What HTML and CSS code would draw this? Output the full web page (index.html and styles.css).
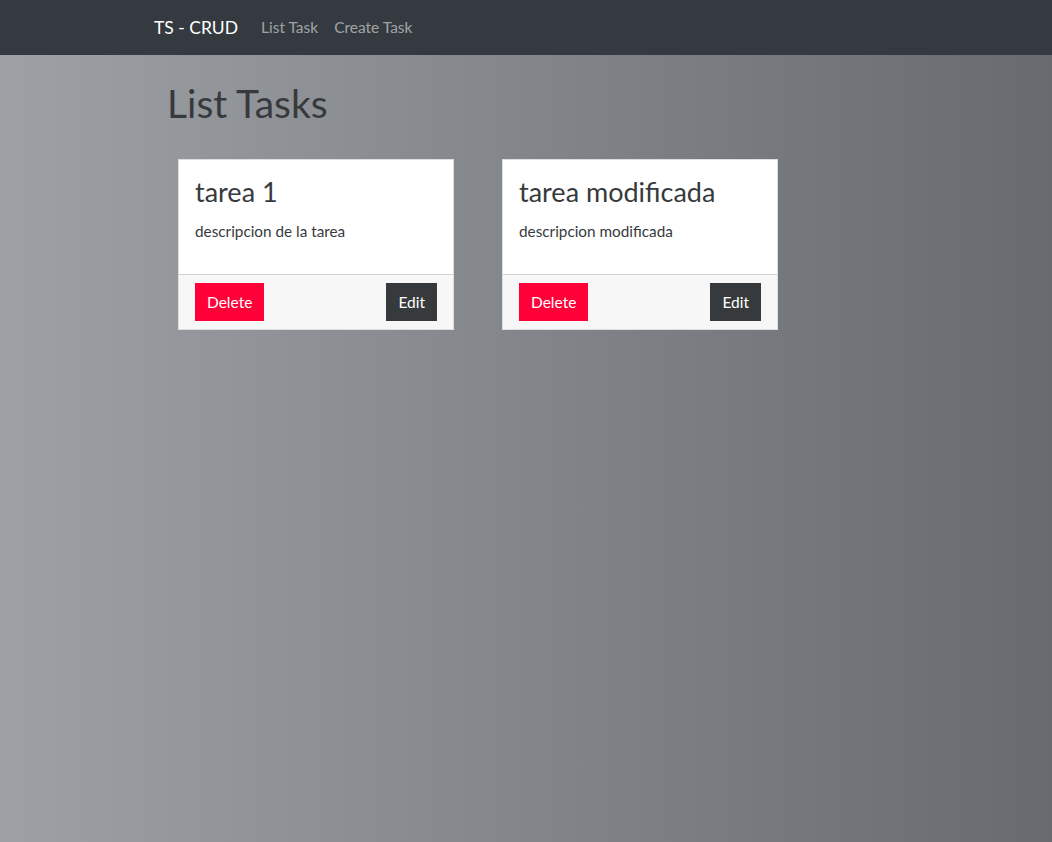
FILE: index.html
```html
<!DOCTYPE html>
<html lang="en">
<head>
<meta charset="utf-8">
<title>TS - CRUD</title>
<link rel="stylesheet" href="styles.css">
</head>
<body>
<nav class="navbar">
  <a class="brand" href="#">TS - CRUD</a>
  <a class="nav-link" href="#">List Task</a>
  <a class="nav-link" href="#">Create Task</a>
</nav>
<main class="main">
  <h1 class="page-title">List Tasks</h1>
  <div class="task-row">
    <div class="task-col">
      <div class="card">
        <div class="card-body">
          <h3 class="card-title">tarea 1</h3>
          <p class="card-text">descripcion de la tarea</p>
        </div>
        <div class="card-footer">
          <button class="btn btn-danger">Delete</button>
          <button class="btn btn-dark">Edit</button>
        </div>
      </div>
    </div>
    <div class="task-col">
      <div class="card">
        <div class="card-body">
          <h3 class="card-title">tarea modificada</h3>
          <p class="card-text">descripcion modificada</p>
        </div>
        <div class="card-footer">
          <button class="btn btn-danger">Delete</button>
          <button class="btn btn-dark">Edit</button>
        </div>
      </div>
    </div>
  </div>
</main>
</body>
</html>
```
FILE: styles.css
```css
* { box-sizing: border-box; }
html, body { height: 100%; }
body {
  margin: 0;
  font-family: "Lato", "Liberation Sans", sans-serif;
  font-size: 15px;
  color: #373a3c;
  background: linear-gradient(to right, #9da1a5, #676b6f);
  min-height: 842px;
}
.navbar {
  height: 55px;
  background: #343a40;
  display: flex;
  align-items: center;
  padding-left: 154px;
  padding-bottom: 1px;
}
.brand {
  color: #fff;
  font-size: 17.5px;
  text-decoration: none;
  margin-right: 23px;
}
.nav-link {
  color: rgba(255,255,255,.55);
  font-size: 15.5px;
  text-decoration: none;
  margin-right: 16px;
}
.main {
  padding-left: 154px;
  padding-top: 24px;
}
.page-title {
  margin: 0 0 32px 13px;
  font-size: 39px;
  font-weight: 400;
  line-height: 48px;
}
.task-row {
  display: flex;
}
.task-col {
  width: 324px;
  padding: 0 24px;
}
.card {
  background: #fff;
  border: 1px solid rgba(0,0,0,.13);
}
.card-body {
  padding: 16px 16px 0;
  height: 114px;
}
.card-title {
  margin: 0 0 12px;
  font-size: 27px;
  font-weight: 400;
  line-height: 32px;
}
.card-text {
  margin: 0;
  font-size: 15.3px;
  line-height: 22px;
}
.card-footer {
  background: #f7f7f7;
  border-top: 1px solid rgba(0,0,0,.15);
  padding: 8px 16px;
  display: flex;
  justify-content: space-between;
}
.btn {
  font-family: inherit;
  font-size: 15.5px;
  line-height: 24px;
  padding: 7px 12px;
  border: 0;
  color: #fff;
  cursor: pointer;
}
.btn-danger { background: #ff0039; }
.btn-dark { background: #373a3c; }
```
